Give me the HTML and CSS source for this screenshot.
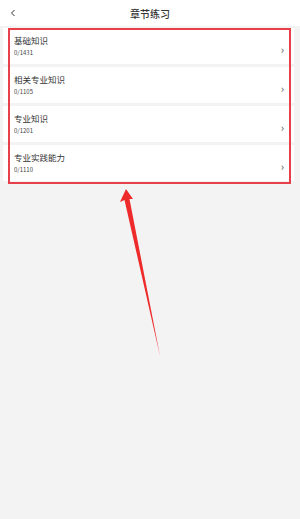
FILE: index.html
```html
<!DOCTYPE html>
<html lang="zh">

<head>
  <meta charset="UTF-8">
  <meta name="viewport" content="width=device-width, initial-scale=1.0">
  <title>章节练习</title>
  <link rel="stylesheet" href="styles.css">
</head>

<body>
  <div class="header">
    <span class="back">
      <svg width="8" height="8" viewBox="0 0 8 8"><path d="M5.5 1 L2.5 4 L5.5 7" fill="none" stroke="#333" stroke-width="1" /></svg>
    </span>
    <div class="title">章节练习</div>
  </div>

  <div class="list">
    <div class="row">
      <div class="info">
        <div class="name">基础知识</div>
        <div class="count">0/1431</div>
      </div>
      <span class="arrow">›</span>
    </div>
    <div class="row">
      <div class="info">
        <div class="name">相关专业知识</div>
        <div class="count">0/1105</div>
      </div>
      <span class="arrow">›</span>
    </div>
    <div class="row">
      <div class="info">
        <div class="name">专业知识</div>
        <div class="count">0/1201</div>
      </div>
      <span class="arrow">›</span>
    </div>
    <div class="row">
      <div class="info">
        <div class="name">专业实践能力</div>
        <div class="count">0/1110</div>
      </div>
      <span class="arrow">›</span>
    </div>
  </div>

  <!-- annotation -->
  <div class="mark"></div>
  <svg class="pointer" width="300" height="519" viewBox="0 0 300 519">
    <polygon points="126,189 120,202 124.5,200 160,356 129.5,199 133,199" fill="#ee2a2a" />
  </svg>
</body>

</html>
```

FILE: styles.css
```css
body {
  margin: 0;
  background: #f3f3f4;
  font-family: "Noto Sans CJK SC", "Noto Sans", sans-serif;
  color: #333;
}

.header {
  height: 26px;
  background: #fff;
  display: flex;
  align-items: center;
  justify-content: center;
  position: relative;
}

.header .back {
  position: absolute;
  left: 9px;
  top: 9px;
  line-height: 0;
}

.header .title {
  font-size: 10px;
  font-weight: 500;
  color: #333;
}

.list {
  padding: 2px 6px 0 3px;
}

.row {
  height: 36px;
  background: #fff;
  margin-bottom: 3px;
  display: flex;
  align-items: center;
  padding: 0 10px 0 11px;
}

.info {
  flex: 1;
}

.name {
  font-size: 8.5px;
  line-height: 12px;
  color: #333;
}

.count {
  font-size: 6px;
  line-height: 10px;
  margin-top: 2.5px;
  color: #444;
}

.arrow {
  font-size: 11px;
  color: #555;
  margin-top: 5px;
}

.mark {
  position: absolute;
  left: 8px;
  top: 28px;
  width: 279px;
  height: 152px;
  border: 2px solid #e8404a;
}

.pointer {
  position: absolute;
  left: 0;
  top: 0;
}
```
